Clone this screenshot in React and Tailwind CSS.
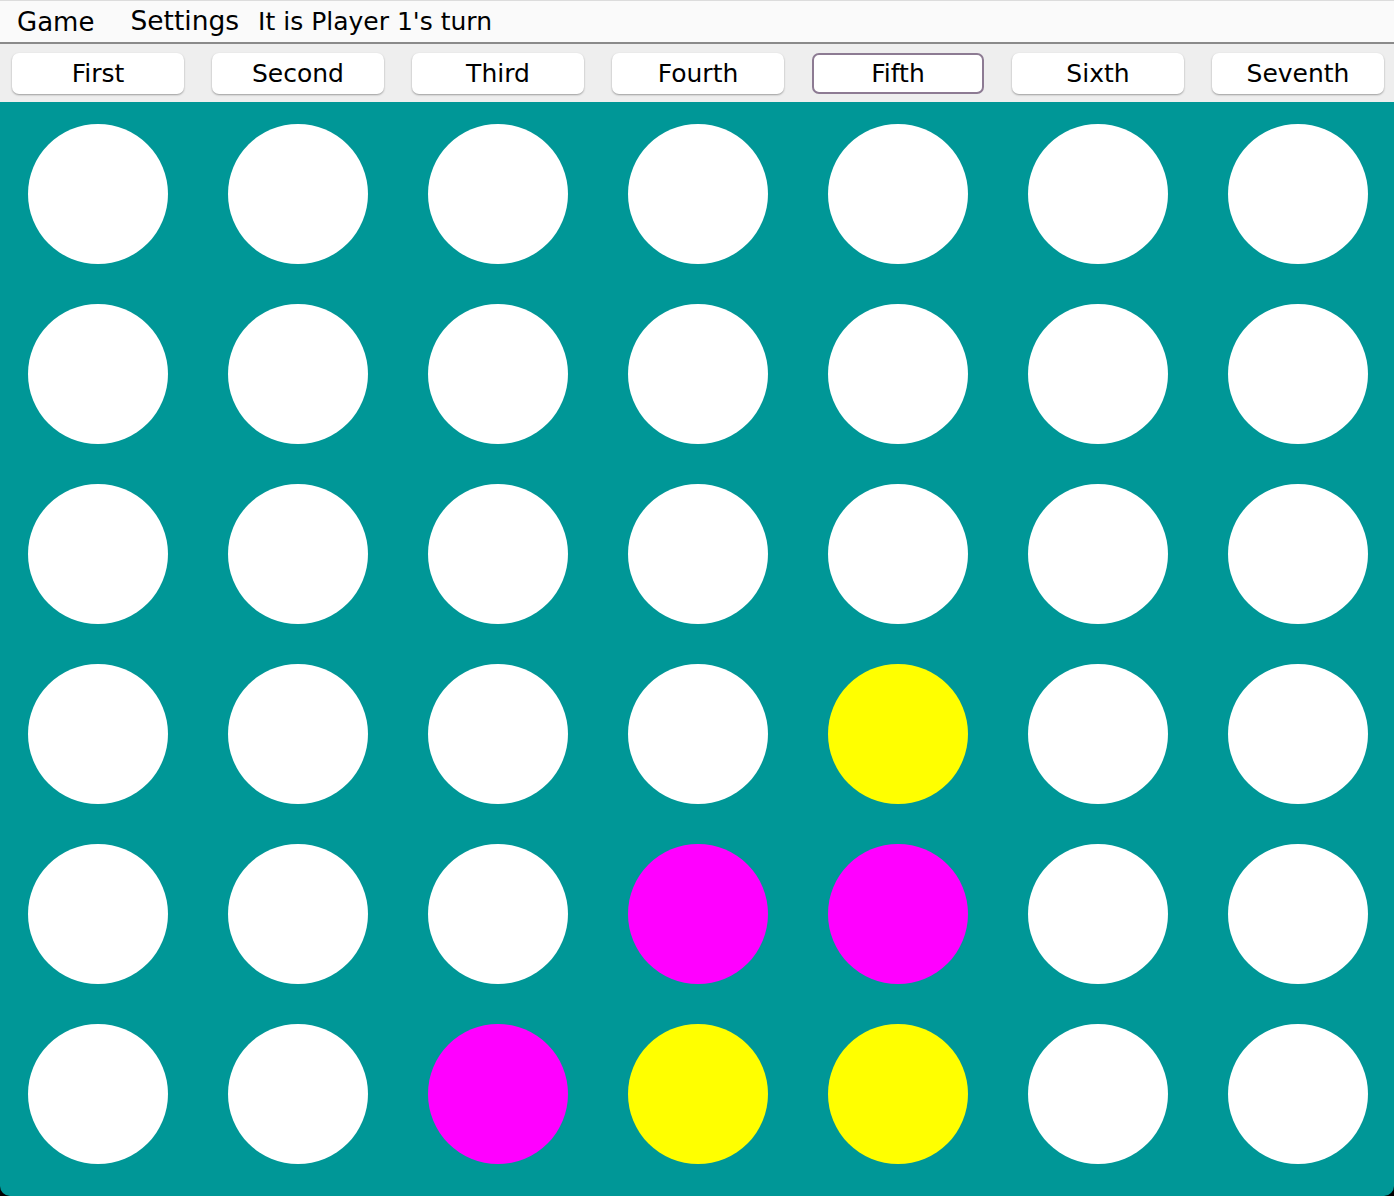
const COLUMNS = ["First", "Second", "Third", "Fourth", "Fifth", "Sixth", "Seventh"];

// board[row][col]: 0 empty, 1 yellow, 2 magenta
const BOARD = [
  [0, 0, 0, 0, 0, 0, 0],
  [0, 0, 0, 0, 0, 0, 0],
  [0, 0, 0, 0, 0, 0, 0],
  [0, 0, 0, 0, 1, 0, 0],
  [0, 0, 0, 2, 2, 0, 0],
  [0, 0, 2, 1, 1, 0, 0],
];

const CELL = {
  0: "bg-white",
  1: "bg-[#ffff00]",
  2: "bg-[#ff00ff]",
};

export default function App() {
  return (
    <div
      className="flex h-[1196px] w-[1394px] flex-col overflow-hidden bg-black text-black"
      style={{ fontFamily: '"DejaVu Sans", "Liberation Sans", sans-serif' }}
    >
      <div className="flex h-[44px] items-center border-t border-b-2 border-t-[#dcdcdc] border-b-[#8a8a8a] bg-[#fafafa]">
        <span className="ml-[17px] text-[26px] leading-none">Game</span>
        <span className="ml-[36px] text-[26.5px] leading-none">Settings</span>
        <span className="ml-[19px] text-[25px] leading-none">It is Player 1's turn</span>
      </div>

      <div className="flex h-[58px] items-center gap-[28px] bg-[#eeeeee] pl-[12px]">
        {COLUMNS.map((name) => (
          <button
            key={name}
            className={`h-[41px] w-[172px] rounded-[7px] bg-white text-[25px] leading-none ${
              name === "Fifth"
                ? "border-2 border-[#8d7b93]"
                : "shadow-[0_1px_2px_rgba(0,0,0,0.35)]"
            }`}
          >
            {name}
          </button>
        ))}
      </div>

      <div className="flex flex-1 flex-col gap-[40px] rounded-b-[10px] bg-[#009797] pl-[28px] pt-[22px]">
        {BOARD.map((row, r) => (
          <div key={r} className="flex gap-[60px]">
            {row.map((v, c) => (
              <div key={c} className={`h-[140px] w-[140px] rounded-full ${CELL[v]}`} />
            ))}
          </div>
        ))}
      </div>
    </div>
  );
}
